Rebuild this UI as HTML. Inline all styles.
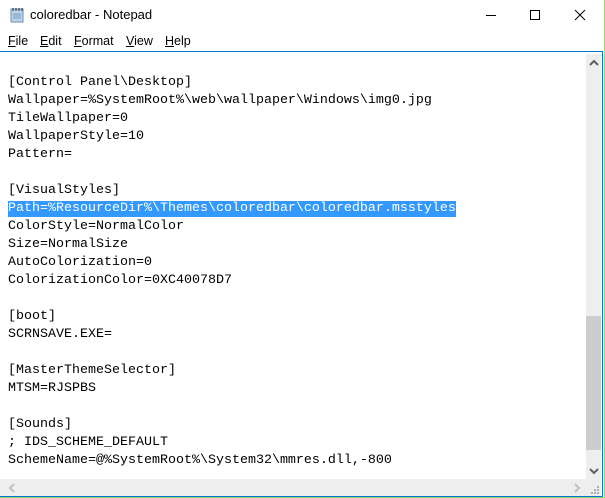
<!DOCTYPE html>
<html><head><style>
*{margin:0;padding:0;box-sizing:border-box}
body{width:605px;height:498px;background:#fff;position:relative;overflow:hidden;font-family:"Liberation Sans",sans-serif}
.win{position:absolute;left:0;top:0;width:605px;height:498px;border-right:1px solid #9fd56e;border-bottom:1px solid #9fd56e}
.title{position:absolute;left:30px;top:7px;font-size:13px;color:#000}
.menu{position:absolute;top:34px;font-size:12.5px}
.menu span{position:absolute;white-space:nowrap}
.menu u{text-decoration:underline}
.edit{position:absolute;left:0;top:51px;width:603px;height:446px;border-top:1px solid #0078d7;border-right:1px solid #0078d7;border-bottom:1px solid #0078d7}
pre{position:absolute;left:8px;top:4px;font-family:"Liberation Mono",monospace;font-size:13.33px;line-height:18px;color:#000}
.sel{background:#3399ff;color:#fff;display:inline-block;height:16px;line-height:16px}
.vs{position:absolute;left:586px;top:2px;width:15px;height:426px;background:#eeeeee}
.thumb{position:absolute;left:586px;top:264px;width:15px;height:134px;background:#cdcdcd}
.hs{position:absolute;left:0;top:427px;width:586px;height:17px;background:#eeeeee}
.corner{position:absolute;left:586px;top:427px;width:15px;height:17px;background:#eeeeee}
</style></head><body>
<div class="win">
<svg style="position:absolute;left:9px;top:7px" width="16" height="16"><rect x="2" y="2" width="12" height="13" fill="#bcd4ea" stroke="#6a8fb3"/><path d="M4 1v3M7 1v3M10 1v3M13 1v3" stroke="#333"/><path d="M4 7h8M4 9h8M4 11h8" stroke="#7a9cc0"/></svg>
<div class="title">coloredbar - Notepad</div>
<svg style="position:absolute;left:484px;top:8px" width="110" height="14"><path d="M2 7.5h10" stroke="#000"/><rect x="46.5" y="2.5" width="9" height="9" fill="none" stroke="#000"/><path d="M91 2l10 10M101 2l-10 10" stroke="#000"/></svg>
<div class="menu">
<span style="left:8px"><u>F</u>ile</span>
<span style="left:40px"><u>E</u>dit</span>
<span style="left:74px"><u>F</u>ormat</span>
<span style="left:126px"><u>V</u>iew</span>
<span style="left:165px"><u>H</u>elp</span>
</div>
<div class="edit">
<pre>&#8203;
[Control Panel\Desktop]
Wallpaper=%SystemRoot%\web\wallpaper\Windows\img0.jpg
TileWallpaper=0
WallpaperStyle=10
Pattern=

[VisualStyles]
<span class="sel">Path=%ResourceDir%\Themes\coloredbar\coloredbar.msstyles</span>
ColorStyle=NormalColor
Size=NormalSize
AutoColorization=0
ColorizationColor=0XC40078D7

[boot]
SCRNSAVE.EXE=

[MasterThemeSelector]
MTSM=RJSPBS

[Sounds]
; IDS_SCHEME_DEFAULT
SchemeName=@%SystemRoot%\System32\mmres.dll,-800
</pre>
<div class="vs"></div>
<div class="thumb"></div>
<svg style="position:absolute;left:589px;top:7px" width="10" height="8"><path d="M1 6l4-4 4 4" stroke="#606060" stroke-width="2" fill="none"/></svg>
<svg style="position:absolute;left:589px;top:415px" width="10" height="8"><path d="M1 2l4 4 4-4" stroke="#606060" stroke-width="2" fill="none"/></svg>
<div class="hs"></div>
<svg style="position:absolute;left:8px;top:431px" width="8" height="10"><path d="M6 1L2 5l4 4" stroke="#c0c0c0" stroke-width="2" fill="none"/></svg>
<svg style="position:absolute;left:573px;top:431px" width="8" height="10"><path d="M2 1l4 4-4 4" stroke="#c0c0c0" stroke-width="2" fill="none"/></svg>
<div class="corner"></div>
<svg style="position:absolute;left:590px;top:433px" width="10" height="10"><g fill="#b0b0b0"><rect x="7" y="1" width="2" height="2"/><rect x="4" y="4" width="2" height="2"/><rect x="7" y="4" width="2" height="2"/><rect x="1" y="7" width="2" height="2"/><rect x="4" y="7" width="2" height="2"/><rect x="7" y="7" width="2" height="2"/></g></svg>
</div>
</div>
</body></html>
